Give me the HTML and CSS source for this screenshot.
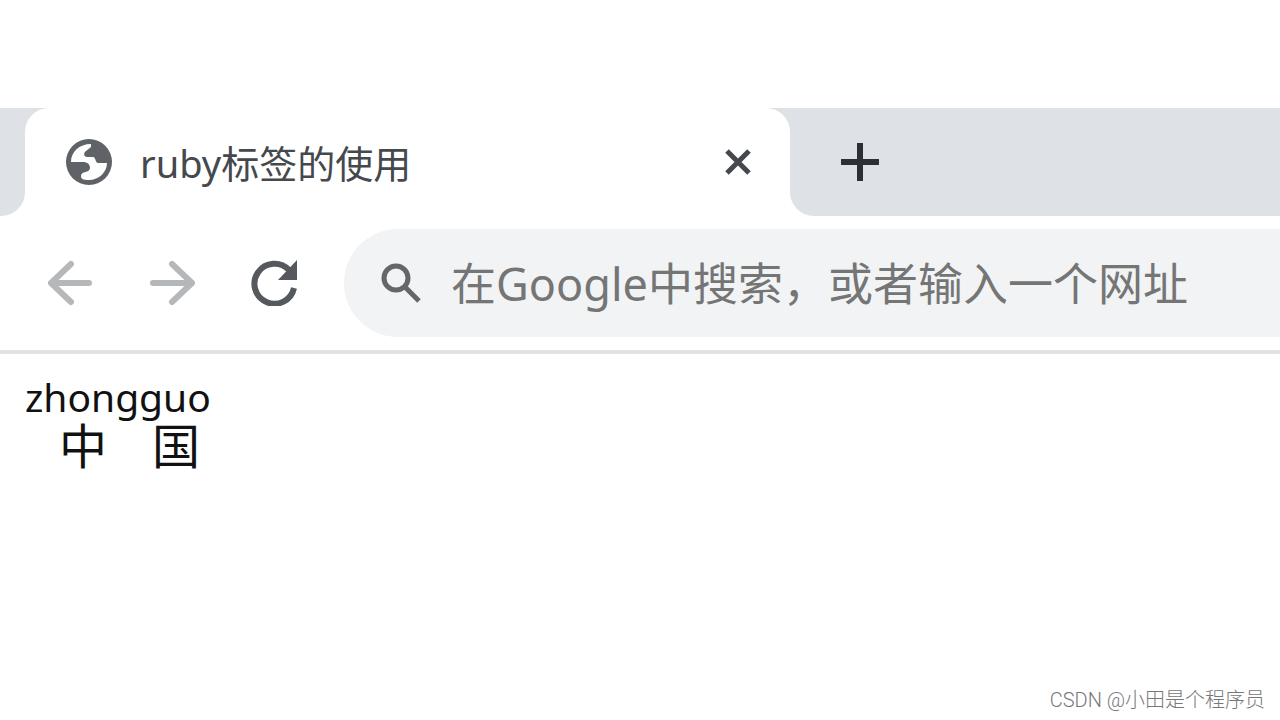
FILE: index.html
```html
<!DOCTYPE html>
<html lang="zh-CN">

<head>
	<meta charset="UTF-8">
	<title>ruby标签的使用</title>
	<link rel="stylesheet" href="styles.css">
</head>

<body>
	<header class="browser">
		<div class="tabStrip">
			<div class="stripLeft"></div>
			<div class="tabHolder">
				<div class="tab">
					<svg class="globe" viewBox="0 0 46 46" aria-hidden="true">
						<circle cx="23" cy="23" r="23" fill="#5f6368" />
						<path fill="#fff" d="M5 23C5 13 13 5 25 5v3l-5 4c-3 2-2 6 1 6h6c3 0 2 6 5 6h9c0 9-8 17-18 17-6 0-8-1-8-4 0-5 9-3 9-8 0-4-3-6-7-6z" />
					</svg>
					<span class="tabTitle">ruby标签的使用</span>
					<button class="iconButton closeTab" type="button" aria-label="关闭">
						<svg viewBox="0 0 28 28"><path d="M3 3l22 22M25 3L3 25" /></svg>
					</button>
				</div>
			</div>
			<div class="stripRest">
				<button class="iconButton newTab" type="button" aria-label="打开新的标签页">
					<svg viewBox="0 0 40 40"><path d="M20 1v38M1 20h38" /></svg>
				</button>
			</div>
		</div>
		<div class="toolbar">
			<nav class="navButtons">
				<button class="iconButton dim" type="button" aria-label="后退">
					<svg viewBox="0 0 46 46"><path d="M42 23H4M24 4L4 23l20 19" /></svg>
				</button>
				<button class="iconButton dim" type="button" aria-label="前进">
					<svg viewBox="0 0 46 46"><path d="M4 23h39M23 4l20 19-20 19" /></svg>
				</button>
				<button class="iconButton reload" type="button" aria-label="重新加载">
					<svg viewBox="0 0 46 46">
						<path d="M43 28A20 20 0 1 1 38 10" />
						<path class="solid" d="M46 0v20H27z" />
					</svg>
				</button>
			</nav>
			<label class="omnibox">
				<svg class="searchIcon" viewBox="0 0 40 40" aria-hidden="true">
					<circle cx="15" cy="15" r="12" />
					<path d="M24 24l14 14" />
				</svg>
				<input class="address" type="text" aria-label="地址和搜索栏" placeholder="在Google中搜索，或者输入一个网址">
			</label>
		</div>
	</header>
	<main class="page">
		<ruby><span class="first">中</span><span class="second">国</span><rt>zhongguo</rt></ruby>
	</main>
	<footer>CSDN @小田是个程序员</footer>
</body>

</html>
```
FILE: styles.css
```css
* {
	box-sizing: border-box;
}

body {
	margin: 0;
	min-height: 100vh;
	display: flex;
	flex-direction: column;
	font-family: "Noto Sans", "Noto Sans CJK SC", sans-serif;
	background: #fff;
}

svg {
	display: block;
	width: 100%;
	fill: none;
	stroke: currentColor;
	stroke-width: 6;
	stroke-linejoin: round;
}

.browser {
	padding-top: 108px;
	border-bottom: 4px solid #e2e2e2;
}

.tabStrip {
	display: flex;
	height: 108px;
}

.stripLeft {
	width: 25px;
	background: #dee1e6;
	border-radius: 0 0 24px 0;
}

.tabHolder {
	flex: 0 1 765px;
	background: #dee1e6;
	border-radius: 0 0 24px 24px;
}

.tab {
	display: flex;
	align-items: center;
	height: 100%;
	padding: 0 38px 0 41px;
	background: #fff;
	border-radius: 24px 24px 0 0;
}

.globe {
	width: 46px;
	stroke: none;
}

.tabTitle {
	flex: 1;
	margin-left: 28px;
	padding-top: 2px;
	font-size: 38px;
	line-height: 48px;
	color: #45494d;
}

.iconButton {
	width: 46px;
	padding: 0;
	border: 0;
	background: none;
	color: #55595e;
}

.closeTab {
	width: 28px;
	color: #45494d;
}

.closeTab svg {
	stroke-width: 5;
}

.stripRest {
	flex: 1;
	display: flex;
	align-items: center;
	padding-left: 50px;
	background: #dee1e6;
	border-radius: 0 0 0 24px;
}

.newTab {
	width: 40px;
	color: #2c3034;
}

.toolbar {
	display: flex;
	align-items: center;
	padding: 13px 0 13px 47px;
}

.navButtons {
	display: flex;
	gap: 56px;
}

.dim {
	color: #b5b8bb;
}

.dim svg {
	stroke-linecap: round;
}

.solid {
	fill: currentColor;
	stroke: none;
}

.omnibox {
	flex: 1;
	display: flex;
	align-items: center;
	height: 108px;
	margin-left: 47px;
	padding-left: 37px;
	background: #f1f3f4;
	border-radius: 54px 0 0 54px;
}

.searchIcon {
	width: 40px;
	stroke: #666;
	stroke-width: 5;
}

.address {
	flex: 1;
	min-width: 0;
	margin-left: 30px;
	padding: 0;
	border: 0;
	outline: 0;
	background: none;
	font: inherit;
	font-size: 45px;
}

.address::placeholder {
	color: #757575;
}

.page {
	flex: 1;
	padding: 72px 25px 16px;
	font-size: 48px;
	line-height: 40px;
	color: #111;
}

.page ruby {
	ruby-align: start;
}

.first {
	margin-left: 34px;
}

.second {
	margin-left: 45px;
}

.page rt {
	font-size: 39px;
	line-height: 48px;
}

footer {
	padding: 4px 15px;
	text-align: right;
	font-family: Roboto, "Noto Sans CJK SC", sans-serif;
	font-size: 20px;
	font-weight: 300;
	line-height: 32px;
	color: #777;
}
```
